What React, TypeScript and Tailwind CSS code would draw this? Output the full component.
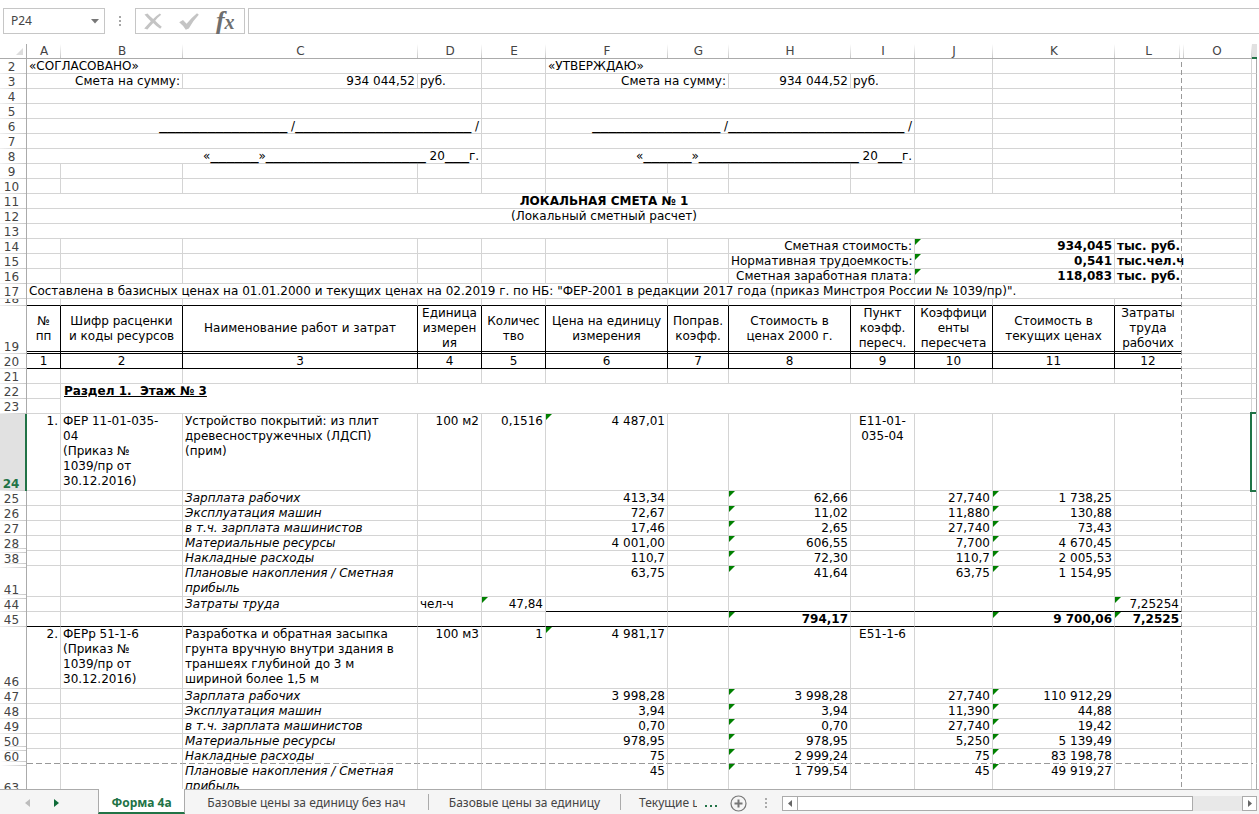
import { Fragment, type ReactNode } from "react";

type Cell = {
  text?: ReactNode;
  span?: number;
  rows?: number;
  align?: "left" | "center" | "right";
  bold?: boolean;
  italic?: boolean;
  flag?: boolean;
  line?: keyof typeof LINES;
};

type Row = {
  n: number;
  height?: string;
  multi?: boolean;
  middle?: boolean;
  selected?: boolean;
  gapAfter?: boolean;
  gapBefore?: boolean;
  pageBreak?: boolean;
  line?: keyof typeof LINES;
  cells: Cell[];
};

const LINES = {
  grid: "border-r border-b border-r-[#d4d4d4] border-b-[#d4d4d4]",
  rule: "border-r border-b border-r-[#d4d4d4] border-b-black",
  head: "border-r border-b-[3px] border-r-black border-b-black [border-bottom-style:double]",
  box: "border-r border-b border-r-black border-b-black",
  page: "border-r border-b border-r-[#d4d4d4] border-b-transparent",
};

const LINES_LAST = {
  grid: "border-r border-b border-r-white border-b-[#d4d4d4]",
  rule: "border-r border-b border-r-white border-b-black",
  head: "border-r border-b-[3px] border-r-white border-b-black [border-bottom-style:double]",
  box: "border-r border-b border-r-white border-b-black",
  page: "border-r border-b border-r-white border-b-transparent",
};

const ALIGN = { left: "text-left", center: "text-center", right: "text-right" };

const e: Cell = {};
const blank = (count: number): Cell[] => Array.from({ length: count }, () => e);
const right = (text: string, more: Cell = {}): Cell => ({ text, align: "right", ...more });

const Blank = ({ n }: { n: number }) => (
  <span className="align-[1px] text-base leading-[0px]">{"_".repeat(n)}</span>
);

const signature = (
  <>
    <Blank n={16} /> /<Blank n={22} /> /
  </>
);
const date = (
  <>
    «<Blank n={6} />»<Blank n={20} /> 20
    <Blank n={3} />
    г.
  </>
);

const approval = (n: number, content?: ReactNode): Row => ({
  n,
  cells: [
    { span: 4, align: "right", text: content },
    e,
    { span: 4, align: "right", text: content },
    ...blank(3),
  ],
});

const total = (n: number, label: string, value: string, unit: string): Row => ({
  n,
  cells: [
    ...blank(7),
    right(label, { span: 2 }),
    right(value, { span: 2, bold: true, flag: true }),
    { text: unit, bold: true },
  ],
});

const detail = (
  n: number,
  label: ReactNode,
  price: string,
  base: string,
  factor: string,
  current: string,
  more: Partial<Row> = {},
): Row => ({
  n,
  ...more,
  cells: [
    e,
    e,
    { text: label, italic: true },
    e,
    e,
    right(price),
    e,
    right(base, { flag: true }),
    e,
    right(factor),
    right(current, { flag: true }),
    e,
  ],
});

const lines = (...parts: string[]) =>
  parts.map((part, i) => (
    <Fragment key={part}>
      {i > 0 && <br />}
      {part}
    </Fragment>
  ));

const plan = lines("Плановые накопления / Сметная", "прибыль");

const headings = [
  lines("№", "пп"),
  lines("Шифр расценки", "и коды ресурсов"),
  lines("Наименование работ и затрат"),
  lines("Единица", "измерен", "ия"),
  lines("Количес", "тво"),
  lines("Цена на единицу", "измерения"),
  lines("Поправ.", "коэфф."),
  lines("Стоимость в", "ценах 2000 г."),
  lines("Пункт", "коэфф.", "пересч."),
  lines("Коэффици", "енты", "пересчета"),
  lines("Стоимость в", "текущих ценах"),
  lines("Затраты", "труда", "рабочих"),
];

const ROWS: Row[] = [
  { n: 2, cells: [{ span: 4, text: "«СОГЛАСОВАНО»" }, e, { span: 4, text: "«УТВЕРЖДАЮ»" }, ...blank(3)] },
  {
    n: 3,
    cells: [
      right("Смета на сумму:", { span: 2 }),
      right("934 044,52"),
      { text: "руб." },
      e,
      right("Смета на сумму:", { span: 2 }),
      right("934 044,52"),
      { text: "руб." },
      ...blank(3),
    ],
  },
  approval(4),
  approval(5),
  approval(6, signature),
  approval(7),
  approval(8, date),
  { n: 9, cells: blank(12) },
  { n: 10, cells: blank(12) },
  { n: 11, cells: [{ span: 12, align: "center", bold: true, text: "ЛОКАЛЬНАЯ СМЕТА № 1" }] },
  { n: 12, cells: [{ span: 12, align: "center", text: "(Локальный сметный расчет)" }] },
  { n: 13, cells: [{ span: 12 }] },
  total(14, "Сметная стоимость:", "934,045", "тыс. руб."),
  total(15, "Нормативная трудоемкость:", "0,541", "тыс.чел.ч"),
  total(16, "Сметная заработная плата:", "118,083", "тыс. руб."),
  {
    n: 17,
    cells: [
      {
        span: 12,
        text: 'Составлена в базисных ценах на 01.01.2000 и текущих ценах на 02.2019 г. по НБ: "ФЕР-2001 в редакции 2017 года (приказ Минстроя России № 1039/пр)".',
      },
    ],
  },
  { n: 18, height: "h-[7px]", line: "rule", cells: blank(12) },
  {
    n: 19,
    height: "h-[48px]",
    multi: true,
    middle: true,
    line: "head",
    cells: headings.map((text) => ({ text, align: "center" as const })),
  },
  {
    n: 20,
    line: "box",
    cells: headings.map((_, i) => ({ text: String(i + 1), align: "center" as const })),
  },
  { n: 21, cells: blank(12) },
  {
    n: 22,
    cells: [e, { span: 11, rows: 2, bold: true, text: <span className="pl-px underline">Раздел 1.&nbsp; Этаж № 3</span> }],
  },
  { n: 23, cells: [e] },
  {
    n: 24,
    height: "h-[77px]",
    multi: true,
    selected: true,
    cells: [
      right("1."),
      { text: lines("ФЕР 11-01-035-", "04", "(Приказ №", "1039/пр от", "30.12.2016)") },
      { text: lines("Устройство покрытий: из плит", "древесностружечных (ЛДСП)", "(прим)") },
      right("100 м2"),
      right("0,1516"),
      right("4 487,01", { flag: true }),
      e,
      e,
      { text: lines("Е11-01-", "035-04"), align: "center" },
      ...blank(3),
    ],
  },
  detail(25, "Зарплата рабочих", "413,34", "62,66", "27,740", "1 738,25"),
  detail(26, "Эксплуатация машин", "72,67", "11,02", "11,880", "130,88"),
  detail(27, "в т.ч. зарплата машинистов", "17,46", "2,65", "27,740", "73,43"),
  detail(28, "Материальные ресурсы", "4 001,00", "606,55", "7,700", "4 670,45", { gapAfter: true }),
  detail(38, "Накладные расходы", "110,7", "72,30", "110,7", "2 005,53", { gapBefore: true, gapAfter: true }),
  detail(41, plan, "63,75", "41,64", "63,75", "1 154,95", {
    height: "h-[31px]",
    multi: true,
    gapBefore: true,
    gapAfter: true,
  }),
  {
    n: 44,
    gapBefore: true,
    cells: [
      e,
      e,
      { text: "Затраты труда", italic: true },
      { text: "чел-ч" },
      right("47,84", { flag: true }),
      ...Array.from({ length: 6 }, (): Cell => ({ line: "rule" })),
      right("7,25254", { flag: true, line: "rule" }),
    ],
  },
  {
    n: 45,
    line: "rule",
    cells: [
      ...blank(7),
      right("794,17", { bold: true, flag: true }),
      e,
      e,
      right("9 700,06", { bold: true, flag: true }),
      right("7,2525", { bold: true, flag: true }),
    ],
  },
  {
    n: 46,
    height: "h-[62px]",
    multi: true,
    cells: [
      right("2."),
      { text: lines("ФЕРр 51-1-6", "(Приказ №", "1039/пр от", "30.12.2016)") },
      {
        text: lines(
          "Разработка и обратная засыпка",
          "грунта вручную внутри здания в",
          "траншеях глубиной до 3 м",
          "шириной более 1,5 м",
        ),
      },
      right("100 м3"),
      right("1"),
      right("4 981,17", { flag: true }),
      e,
      e,
      { text: "Е51-1-6", align: "center" },
      ...blank(3),
    ],
  },
  detail(47, "Зарплата рабочих", "3 998,28", "3 998,28", "27,740", "110 912,29"),
  detail(48, "Эксплуатация машин", "3,94", "3,94", "11,390", "44,88"),
  detail(49, "в т.ч. зарплата машинистов", "0,70", "0,70", "27,740", "19,42"),
  detail(50, "Материальные ресурсы", "978,95", "978,95", "5,250", "5 139,49", { gapAfter: true }),
  detail(60, "Накладные расходы", "75", "2 999,24", "75", "83 198,78", {
    gapBefore: true,
    gapAfter: true,
    pageBreak: true,
    line: "page",
  }),
  detail(63, plan, "45", "1 799,54", "45", "49 919,27", { height: "h-[31px]", multi: true, gapBefore: true }),
];

const COLUMNS = [
  ["A", "w-[34px]"],
  ["B", "w-[122px]"],
  ["C", "w-[235px]"],
  ["D", "w-[64px]"],
  ["E", "w-[64px]"],
  ["F", "w-[122px]"],
  ["G", "w-[61px]"],
  ["H", "w-[122px]"],
  ["I", "w-[64px]"],
  ["J", "w-[78px]"],
  ["K", "w-[122px]"],
  ["L", "w-[67px]"],
  ["O", ""],
];

function Toolbar() {
  return (
    <div className="flex h-[44px] shrink-0 items-start pt-2 pl-[3px]">
      <div className="flex h-[26px] w-[102px] items-center border border-[#c6c6c6] pr-[5px]">
        <input
          aria-label="Имя ячейки"
          defaultValue="P24"
          className="w-0 flex-1 pl-[7px] font-['Noto_Sans',sans-serif] text-xs text-[#444] outline-none"
        />
        <button aria-label="Список имён" className="flex">
          <svg width="8" height="5" viewBox="0 0 8 5">
            <path d="M0 0h8L4 4.500z" fill="#777" />
          </svg>
        </button>
      </div>
      <svg width="30" height="26" viewBox="0 0 30 26" fill="#a6a6a6">
        <rect x="14" y="8" width="2" height="2" />
        <rect x="14" y="12" width="2" height="2" />
        <rect x="14" y="16" width="2" height="2" />
      </svg>
      <div className="flex h-[26px] w-[110px] items-center justify-around border border-[#c6c6c6] pr-px">
        <button aria-label="Отмена" className="flex">
          <svg width="18" height="17" viewBox="0 0 18 17" fill="#c4c4c4">
            <path d="M.5 1.500 3.500.5Q6 3.600 9.200 6 12 2.800 15.800.4L17.200 1.800Q13.800 4.400 11.200 7.800 13.800 10.600 17.800 13.800L16.200 15.800Q12 13 9.200 10 6.200 13 3.400 16.600L.2 15.600Q3.600 11.600 6.800 8.200 3.600 5.200.5 1.500z" />
          </svg>
        </button>
        <button aria-label="Ввод" className="flex">
          <svg width="20" height="17" viewBox="0 0 20 17" fill="#c4c4c4">
            <path d="M.2 9.200 4 7 7.600 10.800Q12 5 18 .2L19.800 1.800Q13.800 8 9.800 15.400L6.800 16.800Q4.200 12.400.2 9.200z" />
          </svg>
        </button>
        <button
          aria-label="Вставить функцию"
          className="font-['Liberation_Serif',serif] text-[26px] leading-6 font-bold text-[#6e6e6e] italic"
        >
          f<span className="text-[20px]">x</span>
        </button>
      </div>
      <input
        aria-label="Строка формул"
        className="ml-[3px] h-[26px] w-0 flex-1 border border-r-0 border-[#c6c6c6] px-1 text-xs outline-none"
      />
    </div>
  );
}

function RowHeader({ row }: { row: Row }) {
  return (
    <th
      className={
        row.selected
          ? "relative border-r-2 border-[#217346] bg-[#e1e1e1] font-bold text-[#217346]"
          : "relative border-r border-[#ababab] font-normal text-[#444]"
      }
    >
      <div className="absolute inset-0 flex items-end justify-center overflow-hidden pr-[3px] leading-[14px]">
        {row.n}
      </div>
      {row.gapBefore && <span className="absolute inset-x-0 top-px h-px bg-linear-to-r from-white to-[#c8c8c8]" />}
      <span
        className={
          row.gapAfter
            ? "absolute inset-x-0 bottom-[2px] h-px bg-linear-to-r from-white to-[#c8c8c8]"
            : "absolute inset-x-0 bottom-0 h-px bg-linear-to-r from-[#f0f0f0] to-[#c8c8c8]"
        }
      />
      {row.pageBreak && (
        <span className="absolute bottom-0 left-[27px] h-px w-[calc(100vw-33px)] bg-[repeating-linear-gradient(90deg,#999_0_6px,transparent_6px_9px)]" />
      )}
    </th>
  );
}

function SheetRow({ row }: { row: Row }) {
  const vertical = row.middle ? "align-middle" : "align-top";
  const leading = row.multi ? "leading-[15px]" : "leading-[14px]";
  return (
    <tr className={row.height ?? "h-[15px]"}>
      <RowHeader row={row} />
      {row.cells.map((cell, i) => {
        const line = cell.line ?? row.line ?? "grid";
        const last = i === row.cells.length - 1 && row.n !== 23;
        return (
          <td
            key={i}
            colSpan={cell.span}
            rowSpan={cell.rows}
            className={`relative px-[2px] ${vertical} ${leading} ${last ? LINES_LAST[line] : LINES[line]} ${
              ALIGN[cell.align ?? "left"]
            } ${cell.bold ? "font-bold" : ""} ${cell.italic ? "italic" : ""}`}
          >
            {cell.flag && (
              <span className="absolute top-0 left-0 border-t-[6px] border-r-[6px] border-t-[#008000] border-r-transparent" />
            )}
            {cell.text}
          </td>
        );
      })}
      <td className={row.pageBreak ? LINES.page : LINES.grid} />
      <td
        className={
          row.pageBreak
            ? "border-r border-b border-r-[#ababab] border-b-transparent"
            : "relative border-r border-b border-r-[#ababab] border-b-[#d4d4d4]"
        }
      >
        {row.selected && (
          <span className="absolute -top-[2px] right-0 -bottom-[2px] -left-[2px] border-2 border-r-0 border-[#217346]" />
        )}
      </td>
    </tr>
  );
}

function Sheet() {
  return (
    <div className="relative mr-[2px] min-h-0 flex-1 overflow-hidden">
      <table className="w-full table-fixed border-separate border-spacing-0 text-xs whitespace-nowrap text-black">
        <colgroup>
          <col className="w-[27px]" />
          {COLUMNS.map(([name, width]) => (
            <col key={name} className={width} />
          ))}
          <col className="w-[5px]" />
        </colgroup>
        <thead>
          <tr className="h-[15px]">
            <th className="relative border-r border-b border-[#ababab]">
              <svg className="absolute right-[3px] bottom-[3px]" width="7" height="7" viewBox="0 0 7 7">
                <path d="M7 0v7H0z" fill="#dcdcdc" />
              </svg>
            </th>
            {COLUMNS.map(([name]) => (
              <th key={name} className="relative border-b border-[#ababab] leading-[14px] font-normal text-[#444]">
                {name}
                {name === "L" ? (
                  <span className="absolute top-0 -right-[2px] bottom-0 flex w-[5px] justify-between">
                    <span className="w-px bg-linear-to-b from-white to-[#c8c8c8]" />
                    <span className="w-px bg-linear-to-b from-white to-[#c8c8c8]" />
                  </span>
                ) : (
                  <span className="absolute inset-y-0 right-0 w-px bg-linear-to-b from-white to-[#c8c8c8]" />
                )}
              </th>
            ))}
            <th className="border-b-2 border-[#217346] bg-[#e1e1e1]" />
          </tr>
        </thead>
        <tbody>
          {ROWS.map((row) => (
            <SheetRow key={row.n} row={row} />
          ))}
        </tbody>
      </table>
      <span className="absolute top-[18px] right-[75px] bottom-0 w-px bg-[repeating-linear-gradient(180deg,#999_0_5px,transparent_5px_8px)]" />
    </div>
  );
}

function Tabs() {
  return (
    <div className="flex h-[25px] shrink-0 border-t border-[#ababab] bg-[#f5f5f5] font-['Noto_Sans',sans-serif] text-xs whitespace-nowrap text-[#444]">
      <div className="flex w-[98px] shrink-0 items-center gap-6 pt-px pl-[25px]">
        <button aria-label="Предыдущий лист" className="flex">
          <svg width="5" height="8" viewBox="0 0 5 8">
            <path d="M5 0v8L0 4z" fill="#bdbdbd" />
          </svg>
        </button>
        <button aria-label="Следующий лист" className="flex">
          <svg width="5" height="8" viewBox="0 0 5 8">
            <path d="M0 0v8l5-4z" fill="#0f6b38" />
          </svg>
        </button>
      </div>
      <button className="-mt-px w-[87px] shrink-0 border-x border-b-2 border-x-[#ababab] border-b-[#217346] bg-white pt-1 font-bold text-[#217346]">
        Форма 4а
      </button>
      <button className="w-[243px] shrink-0 pt-[2px]">Базовые цены за единицу без нач</button>
      <span className="my-1 w-px shrink-0 bg-[#ababab]" />
      <button className="w-[191px] shrink-0 pt-[2px]">Базовые цены за единицу</button>
      <span className="my-1 w-px shrink-0 bg-[#ababab]" />
      <button className="w-[76px] shrink-0 overflow-hidden pt-[2px] pl-[18px] text-left">Текущие цены</button>
      <button aria-label="Другие листы" className="flex w-[28px] shrink-0 items-center justify-center">
        <svg width="12" height="3" viewBox="0 0 12 3" fill="#217346" className="mt-2">
          <rect width="2" height="2" x="0" />
          <rect width="2" height="2" x="5" />
          <rect width="2" height="2" x="10" />
        </svg>
      </button>
      <button aria-label="Новый лист" className="flex w-[26px] shrink-0 items-center justify-center pt-[2px]">
        <svg width="17" height="17" viewBox="0 0 17 17" fill="none" stroke="#777">
          <circle cx="8.5" cy="8.5" r="7.5" strokeWidth="1.200" />
          <path d="M8.500 4.500v8M4.500 8.500h8" strokeWidth="2" />
        </svg>
      </button>
      <svg width="31" height="24" viewBox="0 0 31 24" fill="#ababab" className="shrink-0">
        <rect x="14" y="8" width="2" height="2" />
        <rect x="14" y="12" width="2" height="2" />
        <rect x="14" y="16" width="2" height="2" />
      </svg>
      <div className="mt-1.5 mr-[2px] flex h-[15px] min-w-0 flex-1 bg-[#e8e8e8]">
        <button aria-label="Прокрутить влево" className="flex w-[16px] items-center justify-center border border-[#ababab] bg-white">
          <svg width="4" height="7" viewBox="0 0 4 7">
            <path d="M4 0v7L0 3.500z" fill="#666" />
          </svg>
        </button>
        <div className="-ml-px flex flex-1">
          <div className="w-[89%] border border-[#ababab] bg-white" />
        </div>
        <button aria-label="Прокрутить вправо" className="flex w-[15px] items-center justify-center border border-[#ababab] bg-white">
          <svg width="4" height="7" viewBox="0 0 4 7">
            <path d="M0 0v7l4-3.500z" fill="#666" />
          </svg>
        </button>
      </div>
    </div>
  );
}

export default function App() {
  return (
    <div className="flex h-screen flex-col overflow-hidden bg-white font-['DejaVu_Sans',sans-serif]">
      <Toolbar />
      <Sheet />
      <Tabs />
    </div>
  );
}
